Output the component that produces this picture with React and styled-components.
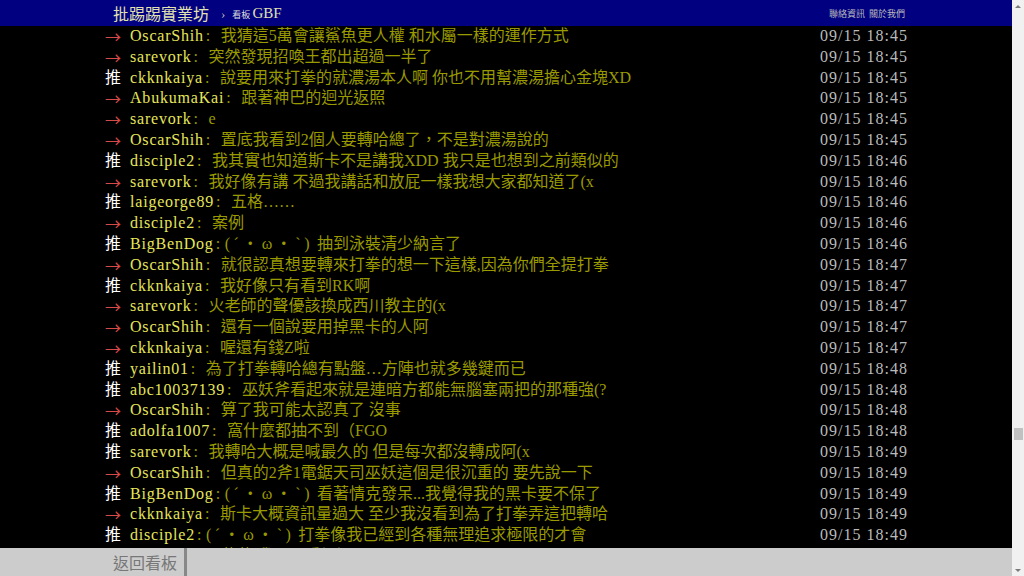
import React from "react";
import styled, { createGlobalStyle } from "styled-components";

const GlobalStyle = createGlobalStyle`
  html, body {
    margin: 0;
    padding: 0;
    height: 100%;
    background: #000;
    overflow: hidden;
  }
`;

const FONT = `"Liberation Serif", "Noto Sans CJK TC", serif`;
const CJK = `"Noto Sans CJK TC", "Liberation Sans", sans-serif`;

const Page = styled.div`
  display: flex;
  width: 1024px;
  height: 576px;
`;

const Main = styled.div`
  flex: 1;
  min-width: 0;
  display: flex;
  flex-direction: column;
  background: #000;
`;

const TopBar = styled.div`
  height: 26px;
  flex-shrink: 0;
  background: #000080;
`;

const Inner = styled.div`
  width: 802px;
  height: 100%;
  margin: 0 auto;
  display: flex;
  align-items: center;
`;

const Logo = styled.span`
  font-family: ${CJK};
  font-size: 16px;
  line-height: 26px;
  color: #e2e2b0;
  margin-left: 8px;
`;

const Chevron = styled.span`
  font-family: ${FONT};
  font-size: 13px;
  color: #bbb;
  margin: 1px 7px 0 12px;
`;

const BoardLabel = styled.span`
  font-family: ${CJK};
  font-size: 9px;
  color: #ddd;
  margin-right: 2px;
  margin-top: 2px;
`;

const BoardName = styled.span`
  font-family: ${FONT};
  font-size: 15px;
  color: #e2e2b0;
`;

const Links = styled.div`
  margin-left: auto;
  margin-right: 2px;
  display: flex;
  gap: 4px;
  font-family: ${CJK};
  font-size: 9px;
  color: #bbb;
`;

const Content = styled.div`
  flex: 1;
  overflow: hidden;
`;

const List = styled.div`
  width: 802px;
  margin: 0 auto;
`;

const Row = styled.div`
  display: flex;
  height: 20.8px;
  line-height: 20.8px;
  font-family: ${FONT};
  font-size: 16px;
  white-space: nowrap;
`;

const Tag = styled.span`
  flex-shrink: 0;
  width: 25px;
  font-family: ${(p) => (p.$push ? FONT : CJK)};
  color: ${(p) => (p.$push ? "#fff" : "#d84a4a")};
`;

const UserId = styled.span`
  color: #e6e65a;
  letter-spacing: 0.8px;
`;

const Colon = styled.span`
  flex-shrink: 0;
  width: 15px;
  padding-left: 2px;
  color: #999900;
`;

const FaceColon = styled(Colon)`
  width: 9px;
`;

const Text = styled.span`
  color: #999900;
`;

const Face = styled.span`
  letter-spacing: 3.5px;
`;

const Time = styled.span`
  margin-left: auto;
  color: #bbb;
  letter-spacing: 1px;
  margin-right: -1px;
`;

const Footer = styled.div`
  height: 28px;
  flex-shrink: 0;
  background: #ccc;
`;

const Back = styled.div`
  height: 100%;
  display: flex;
  align-items: center;
  padding: 0 7px 0 8px;
  border-right: 3px solid #888;
  font-family: ${CJK};
  font-size: 16px;
  line-height: 20px;
  color: #777;
`;

const Scrollbar = styled.div`
  width: 12px;
  flex-shrink: 0;
  display: flex;
  flex-direction: column;
  background: #f1f1f1;
`;

const Arrow = styled.div`
  height: 12px;
  display: flex;
  align-items: center;
  justify-content: center;
  &::before {
    content: "";
    border-left: 3px solid transparent;
    border-right: 3px solid transparent;
    ${(p) => (p.$down ? "border-top" : "border-bottom")}: 3px solid #7a7a7a;
  }
`;

const Track = styled.div`
  flex: 1;
`;

const Thumb = styled.div`
  width: 9px;
  height: 12px;
  margin: ${(p) => p.$offset}px auto 0;
  background: #c1c1c1;
`;

const FACE = "(ˊ・ω・ˋ)";

const pushes = [
  ["→", "OscarShih", "我猜這5萬會讓鯊魚更人權 和水屬一樣的運作方式", "09/15 18:45"],
  ["→", "sarevork", "突然發現招喚王都出超過一半了", "09/15 18:45"],
  ["推", "ckknkaiya", "說要用來打拳的就濃湯本人啊 你也不用幫濃湯擔心金塊XD", "09/15 18:45"],
  ["→", "AbukumaKai", "跟著神巴的迴光返照", "09/15 18:45"],
  ["→", "sarevork", "e", "09/15 18:45"],
  ["→", "OscarShih", "置底我看到2個人要轉哈總了，不是對濃湯說的", "09/15 18:45"],
  ["推", "disciple2", "我其實也知道斯卡不是講我XDD 我只是也想到之前類似的", "09/15 18:46"],
  ["→", "sarevork", "我好像有講 不過我講話和放屁一樣我想大家都知道了(x", "09/15 18:46"],
  ["推", "laigeorge89", "五格……", "09/15 18:46"],
  ["→", "disciple2", "案例", "09/15 18:46"],
  ["推", "BigBenDog", "抽到泳裝清少納言了", "09/15 18:46", true],
  ["→", "OscarShih", "就很認真想要轉來打拳的想一下這樣,因為你們全提打拳", "09/15 18:47"],
  ["推", "ckknkaiya", "我好像只有看到RK啊", "09/15 18:47"],
  ["→", "sarevork", "火老師的聲優該換成西川教主的(x", "09/15 18:47"],
  ["→", "OscarShih", "還有一個說要用掉黑卡的人阿", "09/15 18:47"],
  ["→", "ckknkaiya", "喔還有錢Z啦", "09/15 18:47"],
  ["推", "yailin01", "為了打拳轉哈總有點盤…方陣也就多幾鍵而已", "09/15 18:48"],
  ["推", "abc10037139", "巫妖斧看起來就是連暗方都能無腦塞兩把的那種強(?", "09/15 18:48"],
  ["→", "OscarShih", "算了我可能太認真了 沒事", "09/15 18:48"],
  ["推", "adolfa1007", "窩什麼都抽不到（FGO", "09/15 18:48"],
  ["推", "sarevork", "我轉哈大概是喊最久的 但是每次都沒轉成阿(x", "09/15 18:49"],
  ["→", "OscarShih", "但真的2斧1電鋸天司巫妖這個是很沉重的 要先說一下", "09/15 18:49"],
  ["推", "BigBenDog", "看著情克發呆...我覺得我的黑卡要不保了", "09/15 18:49", true],
  ["→", "ckknkaiya", "斯卡大概資訊量過大 至少我沒看到為了打拳弄這把轉哈", "09/15 18:49"],
  ["推", "disciple2", "打拳像我已經到各種無理追求極限的才會", "09/15 18:49", true],
  ["→", "OscarShih", "恭恭 我可要看好運了", "09/15 18:49"],
];

export default function App() {
  return (
    <>
      <GlobalStyle />
      <Page>
        <Main>
          <TopBar>
            <Inner>
              <Logo>批踢踢實業坊</Logo>
              <Chevron>›</Chevron>
              <BoardLabel>看板</BoardLabel>
              <BoardName>GBF</BoardName>
              <Links>
                <span>聯絡資訊</span>
                <span>關於我們</span>
              </Links>
            </Inner>
          </TopBar>
          <Content>
            <List>
              {pushes.map(([tag, user, text, time, face], i) => (
                <Row key={i}>
                  <Tag $push={tag === "推"}>{tag}</Tag>
                  <UserId>{user}</UserId>
                  {face ? <FaceColon>:</FaceColon> : <Colon>:</Colon>}
                  <Text>
                    {face && <Face>{FACE}</Face>}
                    {face ? " " : ""}
                    {text}
                  </Text>
                  <Time>{time}</Time>
                </Row>
              ))}
            </List>
          </Content>
          <Footer>
            <Inner>
              <Back>返回看板</Back>
            </Inner>
          </Footer>
        </Main>
        <Scrollbar>
          <Arrow />
          <Track>
            <Thumb $offset={416} />
          </Track>
          <Arrow $down />
        </Scrollbar>
      </Page>
    </>
  );
}
